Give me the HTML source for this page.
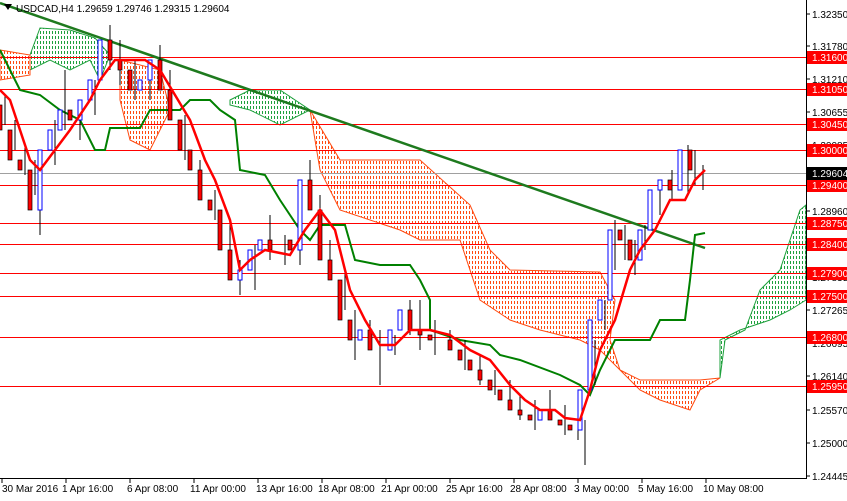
<!DOCTYPE html><html><head><style>
body{margin:0;width:847px;height:496px;background:#fff;overflow:hidden;font-family:"Liberation Sans",sans-serif;}
svg text{font-family:"Liberation Sans",sans-serif;font-size:10px;}
</style></head><body>
<svg width="847" height="496" xmlns="http://www.w3.org/2000/svg">
<defs>
<pattern id="po" width="3" height="5" patternUnits="userSpaceOnUse"><rect x="1" y="1" width="1" height="3" fill="#ff4a10"/></pattern>
<pattern id="pg" width="3" height="5" patternUnits="userSpaceOnUse"><rect x="1" y="1" width="1" height="3" fill="#1ea03c"/></pattern>
</defs>
<rect width="847" height="496" fill="#fff"/>
<g stroke-width="1">
<polygon fill="url(#pg)" stroke="#1ea03c" points="30,55 40,28 70,30 95,38 110,55 100,80 90,60 70,70 50,60 30,70"/>
<polygon fill="url(#po)" stroke="#ff4a10" points="0,50 30,55 30,75 0,80"/>
<polygon fill="url(#po)" stroke="#ff4a10" points="120,60 160,70 170,110 150,150 130,140 120,100"/>
<polygon fill="url(#pg)" stroke="#1ea03c" points="230,100 250,90 280,90 310,110 280,125 250,110 230,105"/>
<polygon fill="url(#po)" stroke="#ff4a10" points="310,110 340,160 420,160 470,205 490,250 510,270 600,272 615,300 610,340 620,370 640,380 700,380 720,378 700,390 690,410 660,400 640,390 620,370 600,350 580,340 540,330 510,320 480,300 460,240 420,240 400,230 340,210 320,170"/>
<polygon fill="url(#pg)" stroke="#1ea03c" points="720,378 725,340 745,330 760,290 780,270 800,210 806,205 806,300 790,310 770,320 740,330 720,340"/>
</g>
<g stroke="#ff0000" stroke-width="1">
<line x1="0" y1="57.5" x2="806" y2="57.5"/><line x1="0" y1="89.5" x2="806" y2="89.5"/>
<line x1="0" y1="124.5" x2="806" y2="124.5"/><line x1="0" y1="150.5" x2="806" y2="150.5"/>
<line x1="0" y1="185.5" x2="806" y2="185.5"/><line x1="0" y1="223.5" x2="806" y2="223.5"/>
<line x1="0" y1="244.5" x2="806" y2="244.5"/><line x1="0" y1="273.5" x2="806" y2="273.5"/>
<line x1="0" y1="296.5" x2="806" y2="296.5"/><line x1="0" y1="337.5" x2="806" y2="337.5"/>
<line x1="0" y1="386.5" x2="806" y2="386.5"/>
</g>
<line x1="0" y1="173.5" x2="806" y2="173.5" stroke="#a0a0a0"/>
<line x1="0" y1="3" x2="705" y2="248" stroke="#1e7a1e" stroke-width="2.5"/>
<polyline fill="none" stroke="#008000" stroke-width="2" points="0,50 10,70 20,90 40,95 60,110 80,120 95,150 105,150 110,128 140,128 150,110 180,110 190,100 210,100 220,110 235,120 240,170 265,175 280,200 300,230 310,240 320,225 345,225 355,260 380,265 410,265 420,280 430,300 430,330 460,340 490,345 500,355 520,360 560,375 580,385 590,395 600,370 615,340 650,340 660,320 685,320 690,280 695,235 705,233"/>
<g stroke="#000" stroke-width="1">
<path d="M5 95V125M15 120V150M25 145V175M35 160V195M40 180V235M55 120V165M65 70V130M80 100V140M95 80V115M110 25V70M120 40V85M135 60V100M150 70V100M160 45V85M170 70V110M185 115V160M200 160V190M215 190V220M230 220V260M240 260V295M255 245V290M270 215V260M285 235V265M300 235V265M310 160V200M320 195V230M330 240V280M345 270V310M355 310V360M370 320V350M380 330V385M395 335V355M410 300V335M420 300V350M435 320V355M450 330V350M465 340V370M480 355V385M495 370V395M510 380V410M520 395V420M535 400V430M550 390V420M565 405V435M578 410V440M585 420V465M595 340V385M605 300V330M615 220V270M625 225V260M635 240V275M645 225V250M660 180V215M672 170V200M688 145V195M695 150V185M703 165V190"/>
</g>
<g fill="#ff0000" stroke="#000" stroke-width="0.7">
<rect x="-2" y="105" width="4" height="25"/><rect x="8" y="130" width="4" height="30"/><rect x="18" y="160" width="4" height="10"/><rect x="28" y="170" width="4" height="40"/>
<rect x="68" y="110" width="4" height="10"/><rect x="108" y="40" width="4" height="20"/><rect x="118" y="60" width="4" height="10"/><rect x="128" y="70" width="4" height="20"/>
<rect x="158" y="60" width="4" height="30"/><rect x="168" y="90" width="4" height="30"/><rect x="178" y="120" width="4" height="30"/><rect x="188" y="150" width="4" height="20"/>
<rect x="198" y="170" width="4" height="30"/><rect x="208" y="200" width="4" height="10"/><rect x="218" y="210" width="4" height="40"/><rect x="228" y="250" width="4" height="30"/>
<rect x="268" y="240" width="4" height="10"/><rect x="288" y="240" width="4" height="10"/><rect x="308" y="180" width="4" height="30"/><rect x="318" y="210" width="4" height="50"/>
<rect x="328" y="260" width="4" height="20"/><rect x="338" y="280" width="4" height="40"/><rect x="348" y="320" width="4" height="20"/><rect x="368" y="330" width="4" height="20"/>
<rect x="408" y="310" width="4" height="20"/><rect x="418" y="330" width="4" height="5"/><rect x="428" y="335" width="4" height="5"/><rect x="448" y="340" width="4" height="10"/>
<rect x="458" y="350" width="4" height="10"/><rect x="468" y="360" width="4" height="10"/><rect x="478" y="370" width="4" height="10"/><rect x="488" y="380" width="4" height="10"/>
<rect x="498" y="390" width="4" height="10"/><rect x="508" y="400" width="4" height="10"/><rect x="518" y="410" width="4" height="5"/><rect x="528" y="415" width="4" height="5"/>
<rect x="548" y="410" width="4" height="10"/><rect x="558" y="420" width="4" height="5"/><rect x="568" y="425" width="4" height="5"/>
<rect x="618" y="230" width="4" height="10"/><rect x="628" y="240" width="4" height="20"/><rect x="668" y="180" width="4" height="10"/><rect x="688" y="150" width="4" height="20"/>
</g>
<g fill="#fff" stroke="#0000ff" stroke-width="1">
<rect x="38" y="150" width="4" height="60"/><rect x="48" y="130" width="4" height="20"/><rect x="58" y="110" width="4" height="20"/><rect x="78" y="100" width="4" height="20"/>
<rect x="88" y="80" width="4" height="20"/><rect x="98" y="40" width="4" height="40"/><rect x="138" y="80" width="4" height="10"/><rect x="148" y="60" width="4" height="20"/>
<rect x="238" y="270" width="4" height="10"/><rect x="248" y="250" width="4" height="20"/><rect x="258" y="240" width="4" height="10"/><rect x="298" y="180" width="4" height="70"/>
<rect x="358" y="330" width="4" height="10"/><rect x="388" y="330" width="4" height="20"/><rect x="398" y="310" width="4" height="20"/><rect x="538" y="410" width="4" height="10"/>
<rect x="578" y="390" width="4" height="40"/><rect x="588" y="320" width="4" height="70"/><rect x="598" y="300" width="4" height="20"/><rect x="608" y="230" width="4" height="70"/>
<rect x="638" y="230" width="4" height="30"/><rect x="648" y="190" width="4" height="40"/><rect x="658" y="180" width="4" height="10"/><rect x="678" y="150" width="4" height="40"/>
</g>
<polyline fill="none" stroke="#ff0000" stroke-width="2.5" points="0,90 10,100 20,130 30,160 40,170 55,150 70,130 90,100 100,80 115,60 130,60 145,60 160,70 175,95 190,120 205,160 215,180 230,220 240,270 250,260 265,250 290,255 305,230 320,210 335,230 350,290 365,320 380,345 395,345 410,330 430,330 450,335 470,350 490,360 510,385 525,400 540,410 555,410 565,418 580,420 590,390 600,350 615,320 630,270 640,250 655,230 670,200 685,200 695,180 705,170"/>
<line x1="806.5" y1="0" x2="806.5" y2="479" stroke="#000"/>
<line x1="0" y1="478.5" x2="807" y2="478.5" stroke="#000"/>
<g stroke="#000">
<path d="M806 14h4M806 46h4M806 79h4M806 112h4M806 145h4M806 211h4M806 277h4M806 310h4M806 343h4M806 376h4M806 410h4M806 443h4M806 476h4"/>
<path d="M2 479v4M66 479v4M130 479v4M194 479v4M258 479v4M322 479v4M386 479v4M450 479v4M514 479v4M578 479v4M642 479v4M706 479v4"/>
</g>
<g fill="#000">
<text x="812" y="18">1.32350</text><text x="812" y="50">1.31780</text><text x="812" y="83">1.31210</text>
<text x="812" y="116">1.30655</text><text x="812" y="149">1.30085</text><text x="812" y="215">1.28960</text>
<text x="812" y="281">1.27835</text><text x="812" y="314">1.27265</text><text x="812" y="347">1.26695</text>
<text x="812" y="380">1.26140</text><text x="812" y="414">1.25570</text><text x="812" y="447">1.25000</text><text x="812" y="480">1.24445</text>
</g>
<g fill="#ff0000">
<rect x="807" y="51" width="40" height="13"/><rect x="807" y="83" width="40" height="13"/>
<rect x="807" y="118" width="40" height="13"/><rect x="807" y="144" width="40" height="13"/>
<rect x="807" y="179" width="40" height="13"/><rect x="807" y="217" width="40" height="13"/>
<rect x="807" y="238" width="40" height="13"/><rect x="807" y="267" width="40" height="13"/>
<rect x="807" y="290" width="40" height="13"/><rect x="807" y="331" width="40" height="13"/>
<rect x="807" y="380" width="40" height="13"/>
</g>
<rect x="807" y="167" width="40" height="13" fill="#000"/>
<g fill="#fff">
<text x="812" y="61">1.31600</text><text x="812" y="93">1.31050</text><text x="812" y="128">1.30450</text>
<text x="812" y="154">1.30000</text><text x="812" y="177">1.29604</text><text x="812" y="189">1.29400</text>
<text x="812" y="227">1.28750</text><text x="812" y="248">1.28400</text><text x="812" y="277">1.27900</text>
<text x="812" y="300">1.27500</text><text x="812" y="341">1.26800</text><text x="812" y="390">1.25950</text>
</g>
<g fill="#000">
<text x="2" y="492">30 Mar 2016</text><text x="62" y="492">1 Apr 16:00</text><text x="127" y="492">6 Apr 08:00</text>
<text x="190" y="492">11 Apr 00:00</text><text x="256" y="492">13 Apr 16:00</text><text x="318" y="492">18 Apr 08:00</text>
<text x="381" y="492">21 Apr 00:00</text><text x="446" y="492">25 Apr 16:00</text><text x="510" y="492">28 Apr 08:00</text>
<text x="574" y="492">3 May 00:00</text><text x="638" y="492">5 May 16:00</text><text x="703" y="492">10 May 08:00</text>
</g>
<polygon points="4,4 12,4 8,10" fill="#000"/>
<text x="16" y="12" fill="#000">USDCAD,H4  1.29659 1.29746 1.29315 1.29604</text>
</svg>
</body></html>
